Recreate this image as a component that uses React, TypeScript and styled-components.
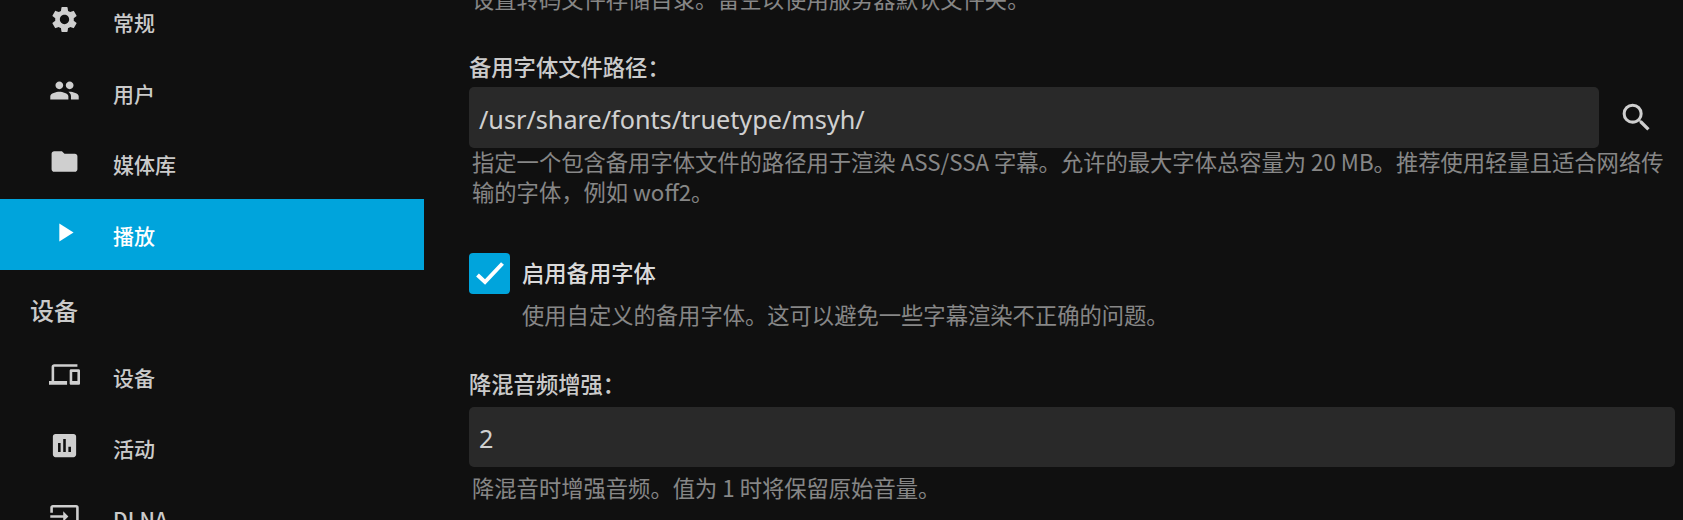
import styled, { createGlobalStyle } from "styled-components";
import {
  MdAssessment,
  MdDevices,
  MdFolder,
  MdInput,
  MdPeople,
  MdPlayArrow,
  MdSearch,
  MdSettings,
} from "react-icons/md";

const GlobalStyle = createGlobalStyle`
  html, body {
    margin: 0;
    background: #101010;
  }
  body {
    font-family: "Noto Sans CJK SC", "Noto Sans", sans-serif;
  }
`;

const Page = styled.div`
  display: flex;
  width: 1683px;
  height: 520px;
  overflow: hidden;
  background: #101010;
`;

const Sidebar = styled.nav`
  flex: 0 0 424px;
  margin-top: -14px;
`;

const NavRow = styled.div<{ $active?: boolean }>`
  display: flex;
  align-items: center;
  height: 71px;
  padding-left: 49px;
  background: ${(p) => (p.$active ? "#00a4dc" : "transparent")};
  color: ${(p) => (p.$active ? "#fff" : "rgba(255, 255, 255, 0.8)")};
  font-size: 21px;
  font-weight: 500;

  svg {
    flex: 0 0 31px;
    width: 31px;
    height: 31px;
    margin-right: 33px;
    transform: translateY(-2px);
  }
`;

const NavHeading = styled.h3`
  display: flex;
  align-items: center;
  box-sizing: border-box;
  height: 71px;
  margin: 0;
  padding: 8px 0 0 30px;
  color: rgba(255, 255, 255, 0.8);
  font-size: 24px;
  font-weight: 500;
`;

const Main = styled.main`
  flex: 1;
  padding: 0 8px 0 45px;
  margin-top: -17px;
  font-size: 22.3px;
`;

const Hint = styled.div<{ $indent?: number; $top?: number }>`
  margin-top: ${(p) => p.$top ?? 0}px;
  margin-left: ${(p) => p.$indent ?? 3}px;
  color: rgba(255, 255, 255, 0.5);
  line-height: 30px;
`;

const Field = styled.div<{ $top: number }>`
  margin-top: ${(p) => p.$top}px;
`;

const FieldLabel = styled.label<{ $gap?: number }>`
  display: block;
  margin-bottom: ${(p) => p.$gap ?? 7}px;
  color: rgba(255, 255, 255, 0.8);
  font-weight: 500;
  line-height: 28px;
`;

const InputRow = styled.div`
  display: flex;
  align-items: center;
`;

const TextBox = styled.div<{ $short?: boolean }>`
  box-sizing: border-box;
  display: flex;
  align-items: center;
  flex: 0 0 1130px;
  height: ${(p) => (p.$short ? 60 : 61)}px;
  padding: 2px 0 0 10px;
  border-radius: 5px;
  background: #292929;
  color: rgba(255, 255, 255, 0.8);
  font-family: "Noto Sans", sans-serif;
  font-size: 25.2px;
`;

const IconButton = styled.button`
  display: flex;
  align-items: center;
  justify-content: center;
  width: 74px;
  height: 61px;
  padding: 0;
  border: 0;
  background: none;
  color: rgba(255, 255, 255, 0.8);

  svg {
    width: 37px;
    height: 37px;
  }
`;

const CheckRow = styled.div`
  display: flex;
  align-items: center;
  margin-top: 47px;
  color: rgba(255, 255, 255, 0.87);
  font-weight: 500;
`;

const CheckBox = styled.span`
  display: block;
  width: 41px;
  height: 41px;
  margin-right: 12px;
  border-radius: 4px;
  background: #00a4dc;

  svg {
    display: block;
    width: 41px;
    height: 41px;
  }
`;

const CheckText = styled.span`
  margin-bottom: 4px;
`;

const primaryNav = [
  { icon: <MdSettings />, label: "常规" },
  { icon: <MdPeople />, label: "用户" },
  { icon: <MdFolder />, label: "媒体库" },
  { icon: <MdPlayArrow />, label: "播放", active: true },
];

const deviceNav = [
  { icon: <MdDevices />, label: "设备" },
  { icon: <MdAssessment />, label: "活动" },
  { icon: <MdInput />, label: "DLNA" },
];

export default function App() {
  return (
    <Page>
      <GlobalStyle />
      <Sidebar>
        {primaryNav.map((item) => (
          <NavRow key={item.label} $active={item.active}>
            {item.icon}
            <span>{item.label}</span>
          </NavRow>
        ))}
        <NavHeading>设备</NavHeading>
        {deviceNav.map((item) => (
          <NavRow key={item.label}>
            {item.icon}
            <span>{item.label}</span>
          </NavRow>
        ))}
      </Sidebar>
      <Main>
        <Hint>设置转码文件存储目录。留空以使用服务器默认文件夹。</Hint>
        <Field $top={39}>
          <FieldLabel>备用字体文件路径：</FieldLabel>
          <InputRow>
            <TextBox>/usr/share/fonts/truetype/msyh/</TextBox>
            <IconButton>
              <MdSearch />
            </IconButton>
          </InputRow>
          <Hint $top={-2}>
            指定一个包含备用字体文件的路径用于渲染 ASS/SSA 字幕。允许的最大字体总容量为 20 MB。推荐使用轻量且适合网络传输的字体，例如 woff2。
          </Hint>
        </Field>
        <CheckRow>
          <CheckBox>
            <svg viewBox="0 0 41 41" fill="none" stroke="#fff" strokeWidth="4">
              <path d="M8.5 22 L16 29 L33.5 10.5" />
            </svg>
          </CheckBox>
          <CheckText>启用备用字体</CheckText>
        </CheckRow>
        <Hint $indent={53} $top={5}>
          使用自定义的备用字体。这可以避免一些字幕渲染不正确的问题。
        </Hint>
        <Field $top={40}>
          <FieldLabel $gap={10}>降混音频增强：</FieldLabel>
          <TextBox $short>2</TextBox>
          <Hint $top={5}>降混音时增强音频。值为 1 时将保留原始音量。</Hint>
        </Field>
      </Main>
    </Page>
  );
}
